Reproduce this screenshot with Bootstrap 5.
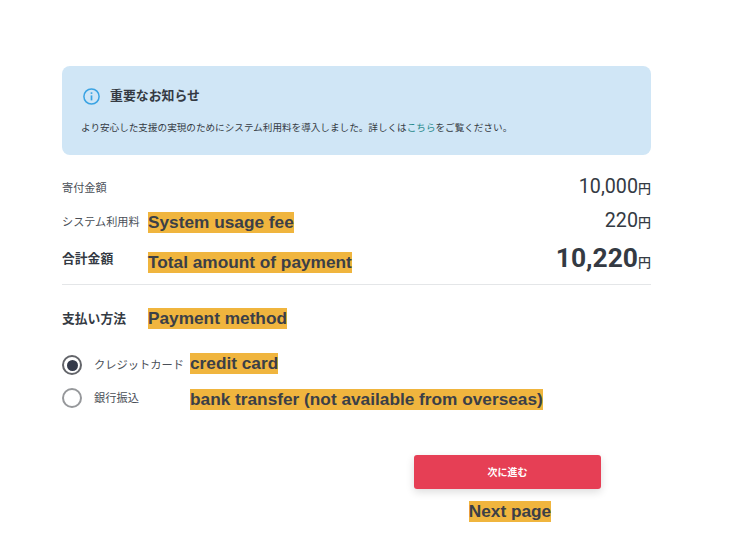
<!doctype html>
<html lang="ja">

<head>
    <meta charset="utf-8">
    <meta name="viewport" content="width=device-width, initial-scale=1">
    <link href="https://cdn.jsdelivr.net/npm/bootstrap@5.3.3/dist/css/bootstrap.min.css" rel="stylesheet">
    <title>お支払い</title>
    <style>
        body {
            font-family: Roboto, "Noto Sans CJK JP", sans-serif;
            color: #343a43;
            background: #fff;
        }

        .page-wrap {
            width: 589px;
            margin-left: 62px;
            padding-top: 66px;
        }

        .notice-box {
            height: 89px;
            background: #d0e6f6;
            border-radius: 8px;
            padding: 20px 19px 0;
        }

        .notice-title {
            font-size: 12.9px;
            font-weight: 700;
            line-height: 20px;
        }

        .notice-icon {
            margin-left: 2px;
            margin-right: 2px;
        }

        .notice-text {
            font-size: 9.6px;
            line-height: 16px;
            margin-top: 14px;
        }

        .notice-text span {
            color: #2a8a8c;
        }

        .fee-row {
            height: 34px;
        }

        .fee-label {
            width: 86px;
            font-size: 11.15px;
            color: #4a4f57;
            flex-shrink: 0;
            padding-top: 2px;
        }

        .fee-value {
            font-size: 19.7px;
            line-height: 1;
            margin-bottom: 3px;
        }

        .yen {
            font-size: 13px;
            font-weight: 500;
        }

        .total-row {
            height: 38px;
        }

        .total-label {
            font-size: 12.8px;
            font-weight: 700;
            color: #343a43;
            align-self: flex-start;
            padding-top: 10px;
        }

        .total-value {
            font-size: 26.4px;
            font-weight: 700;
            line-height: 1;
        }

        .note {
            font-family: "Liberation Sans", sans-serif;
            font-size: 17.25px;
            font-weight: 700;
            line-height: 21px;
            background: #f0b53e;
            color: #3b3f47;
            white-space: nowrap;
        }

        .total-note {
            margin-top: 9px;
        }

        .divider {
            height: 1px;
            background: #e4e6e8;
            margin-top: 7px;
        }

        .method-row {
            margin-top: 22px;
            height: 22px;
        }

        .method-label {
            width: 86px;
            font-size: 12.8px;
            font-weight: 700;
            flex-shrink: 0;
            padding-top: 2px;
        }

        .pay-option {
            height: 33px;
        }

        .pay-options {
            margin-top: 19px;
        }

        .pay-radio {
            width: 20px;
            height: 20px;
            border: 2px solid #96989b;
            border-radius: 50%;
            flex-shrink: 0;
            margin-right: 12px;
            padding: 2.5px;
            background-clip: content-box;
        }

        .pay-radio.is-on {
            background-color: #343a4a;
            border-color: #63656a;
        }

        .pay-label {
            width: 96px;
            font-size: 11.25px;
            color: #4a4f57;
            flex-shrink: 0;
            padding-top: 4px;
        }

        .card-note {
            margin-bottom: 2px;
        }

        .bank-note {
            margin-top: 4px;
        }

        .next-block {
            width: 187px;
            margin-left: 352px;
            margin-top: 41px;
        }

        .next-btn {
            height: 34px;
            font-size: 10px;
            font-weight: 700;
            background: #e63f55;
            border: 0;
            color: #fff;
            border-radius: 3px;
            box-shadow: 0 3px 8px rgba(0, 0, 0, .14);
        }

        .next-btn:hover {
            background: #d93449;
            color: #fff;
        }

        .next-note {
            margin-top: 12px;
            margin-left: 5px;
        }
    </style>
</head>

<body>
    <div class="page-wrap">
        <div class="notice-box">
            <div class="d-flex align-items-center notice-title gap-2">
                <svg class="notice-icon" width="17" height="17" viewBox="0 0 17 17" fill="none" stroke="#3aa3e3" stroke-width="1.5">
                    <circle cx="8.5" cy="8.5" r="7.6"></circle>
                    <path d="M8.5 7.4v5" stroke-width="1.7"></path>
                    <path d="M8.5 4.3v1.6" stroke-width="1.7"></path>
                </svg>
                <span>重要なお知らせ</span>
            </div>
            <p class="notice-text mb-0">より安心した支援の実現のためにシステム利用料を導入しました。詳しくは<span>こちら</span>をご覧ください。</p>
        </div>

        <div class="mt-3">
            <div class="fee-row d-flex align-items-center">
                <div class="fee-label">寄付金額</div>
                <div class="fee-value ms-auto">10,000<span class="yen">円</span></div>
            </div>
            <div class="fee-row d-flex align-items-center">
                <div class="fee-label">システム利用料</div>
                <span class="note">System usage fee</span>
                <div class="fee-value ms-auto">220<span class="yen">円</span></div>
            </div>
            <div class="total-row d-flex align-items-center">
                <div class="fee-label total-label">合計金額</div>
                <span class="note total-note">Total amount of payment</span>
                <div class="total-value ms-auto">10,220<span class="yen">円</span></div>
            </div>
        </div>

        <div class="divider"></div>

        <div class="method-row d-flex align-items-center">
            <div class="method-label">支払い方法</div>
            <span class="note">Payment method</span>
        </div>

        <div class="pay-options">
            <div class="pay-option d-flex align-items-center">
                <div class="pay-radio is-on"></div>
                <div class="pay-label">クレジットカード</div>
                <span class="note card-note">credit card</span>
            </div>
            <div class="pay-option d-flex align-items-center">
                <div class="pay-radio"></div>
                <div class="pay-label">銀行振込</div>
                <span class="note bank-note">bank transfer (not available from overseas)</span>
            </div>
        </div>

        <div class="next-block d-flex flex-column align-items-center">
            <button type="button" class="btn next-btn w-100 p-0">次に進む</button>
            <span class="note next-note">Next page</span>
        </div>
    </div>

    <script src="https://cdn.jsdelivr.net/npm/bootstrap@5.3.3/dist/js/bootstrap.bundle.min.js"></script>
</body>

</html>
